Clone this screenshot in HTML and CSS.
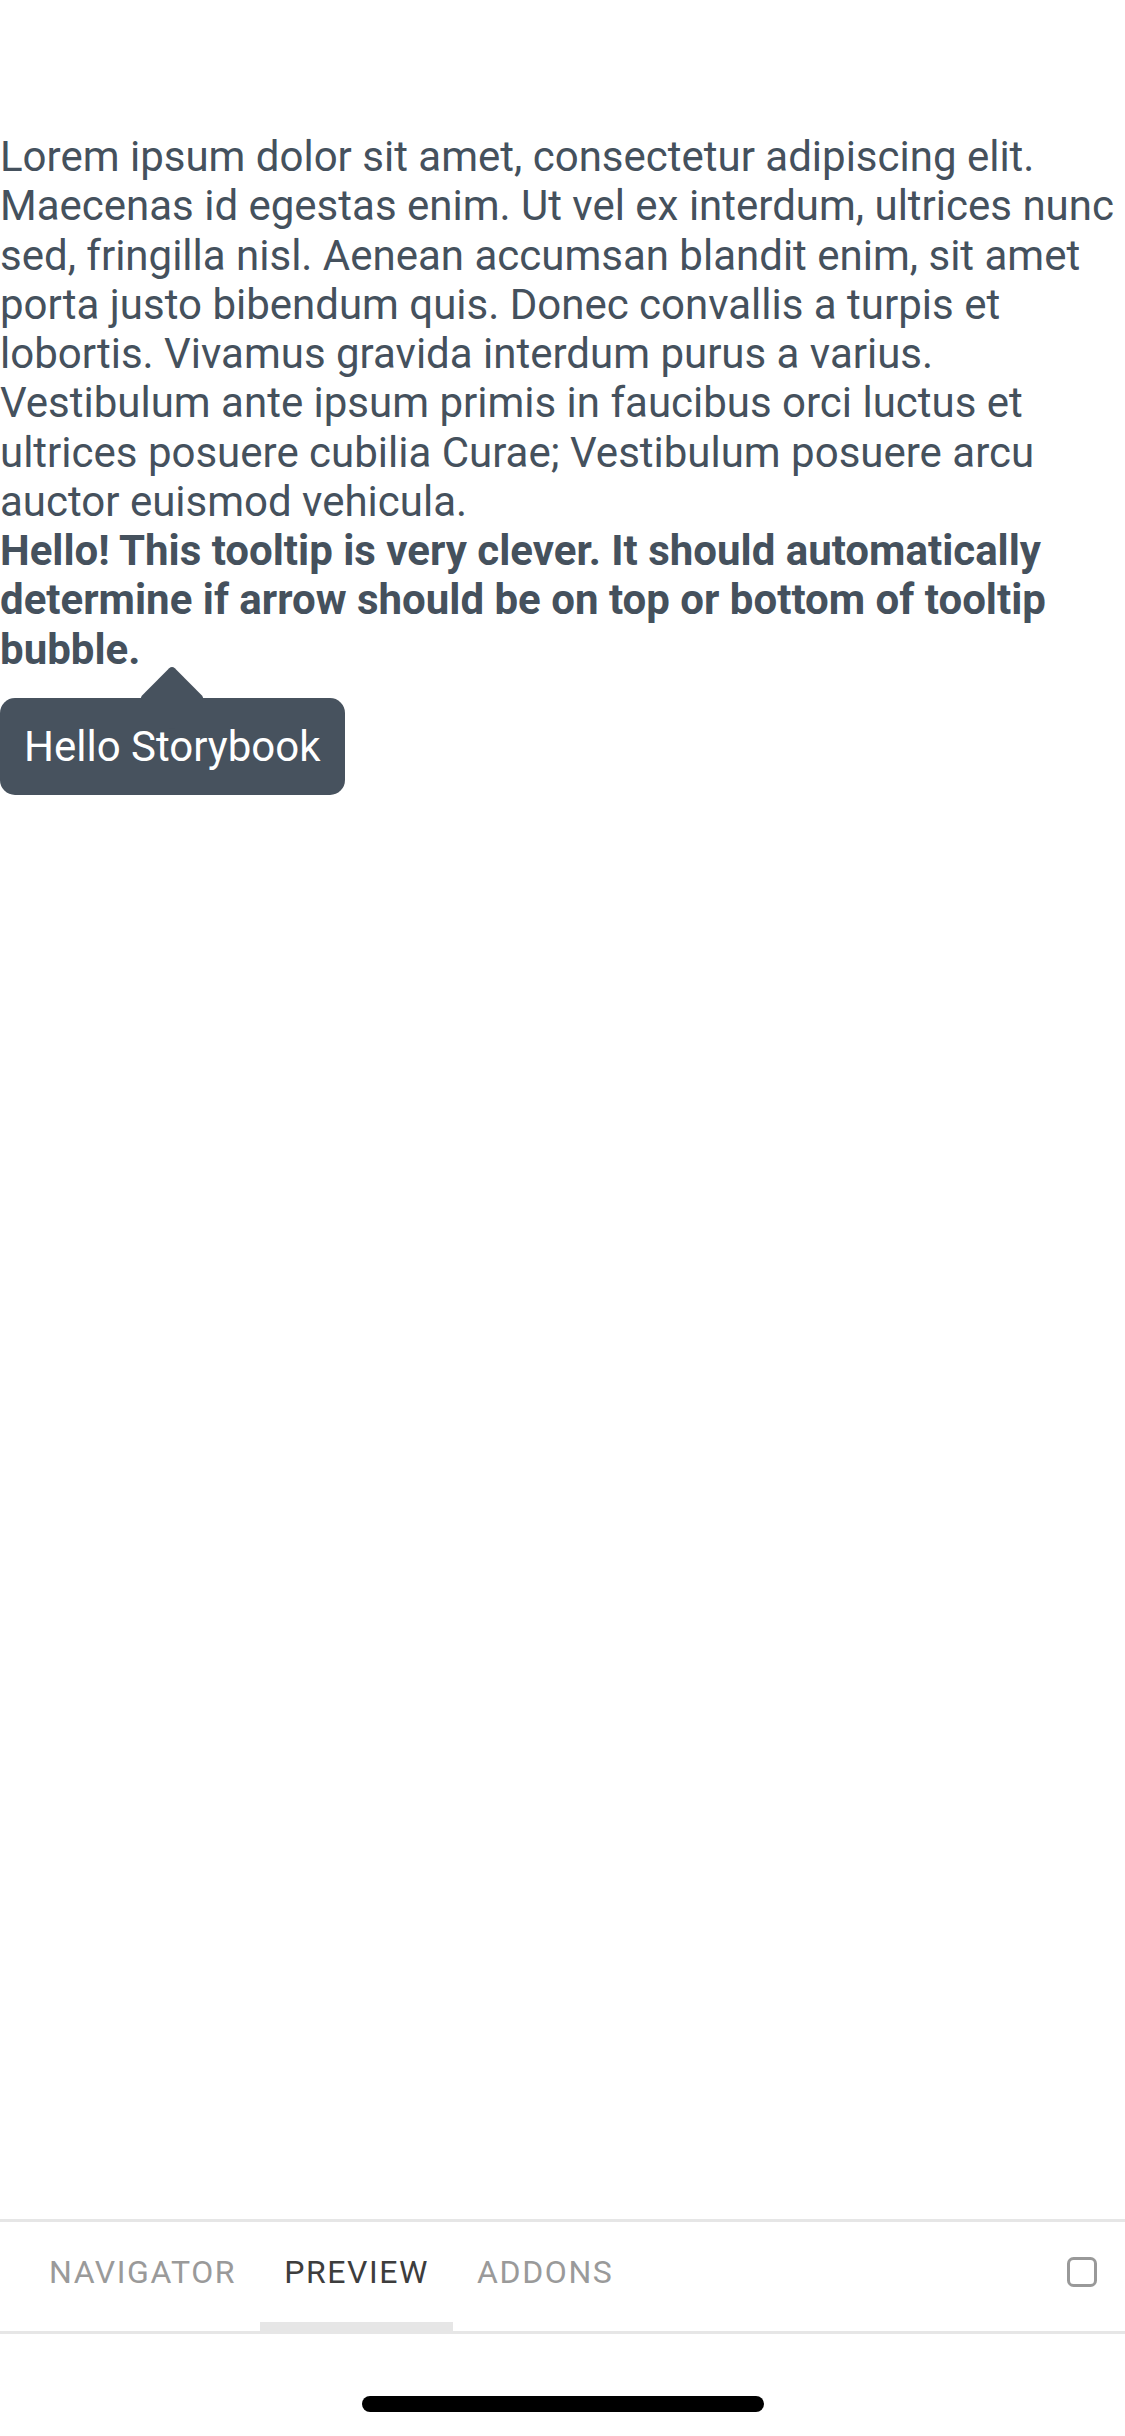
FILE: index.html
```html
<!DOCTYPE html>
<html lang="en">
<head>
<meta charset="utf-8">
<title>Tooltip story</title>
<link rel="stylesheet" href="styles.css">
</head>
<body>
<div class="screen">
  <main class="content">
    <p class="para">Lorem ipsum dolor sit amet, consectetur adipiscing elit. Maecenas id egestas enim. Ut vel ex interdum, ultrices nunc sed, fringilla nisl. Aenean accumsan blandit enim, sit amet porta justo bibendum quis. Donec convallis a turpis et lobortis. Vivamus gravida interdum purus a varius. Vestibulum ante ipsum primis in faucibus orci luctus et ultrices posuere cubilia Curae; Vestibulum posuere arcu auctor euismod vehicula.</p>
    <p class="para bold">Hello! This tooltip is very clever. It should automatically determine if arrow should be on top or bottom of tooltip bubble.</p>
    <div class="tooltip">
      <span class="tooltip-arrow"></span>
      <span class="tooltip-text">Hello Storybook</span>
    </div>
  </main>
  <nav class="tabbar">
    <div class="tab">NAVIGATOR</div>
    <div class="tab active">PREVIEW</div>
    <div class="tab">ADDONS</div>
    <div class="spacer"></div>
    <div class="toggle">
      <svg width="32" height="32" viewBox="0 0 32 32"><rect x="2.5" y="2.5" width="27" height="27" rx="5" fill="none" stroke="#999" stroke-width="3"/></svg>
    </div>
  </nav>
  <div class="home">
    <div class="home-bar"></div>
  </div>
</div>
</body>
</html>
```

FILE: styles.css
```css
html, body {
  margin: 0;
  padding: 0;
  background: #ffffff;
}

.screen {
  width: 1125px;
  height: 2436px;
  display: flex;
  flex-direction: column;
  font-family: Roboto, "Noto Sans", sans-serif;
}

.content {
  flex: 1;
  display: flex;
  flex-direction: column;
  align-items: flex-start;
  padding-top: 132px;
}

.para {
  margin: 0;
  font-size: 42px;
  line-height: 49.25px;
  color: #45515d;
}

.bold {
  font-weight: 700;
}

.tooltip {
  position: relative;
  margin-top: 24px;
  background: #47525e;
  border-radius: 15px;
  padding: 24px 24px;
}

.tooltip-arrow {
  position: absolute;
  left: 50%;
  top: 0;
  width: 46px;
  height: 46px;
  margin-left: -23px;
  margin-top: -23px;
  background: #47525e;
  border-radius: 4px;
  transform: rotate(45deg);
}

.tooltip-text {
  position: relative;
  display: block;
  font-size: 42px;
  line-height: 49.25px;
  color: #ffffff;
}

.tabbar {
  flex: none;
  display: flex;
  align-items: stretch;
  height: 109px;
  border-top: 3px solid #e6e6e6;
  border-bottom: 3px solid #e6e6e6;
  padding: 0 27px 0 25px;
}

.tab {
  display: flex;
  align-items: center;
  padding: 0 24px;
  border-bottom: 9px solid transparent;
  font-size: 32px;
  letter-spacing: 1.6px;
  color: #9a9a9a;
}

.tab.active {
  color: #3d3d3d;
  border-bottom-color: #e6e6e6;
}

.spacer {
  flex: 1;
}

.toggle {
  display: flex;
  align-items: center;
  padding-bottom: 9px;
}

.toggle svg {
  display: block;
}

.home {
  flex: none;
  height: 102px;
  box-sizing: border-box;
  display: flex;
  justify-content: center;
  align-items: flex-end;
  padding-bottom: 24px;
}

.home-bar {
  width: 402px;
  height: 16px;
  border-radius: 8px;
  background: #000000;
}
```
